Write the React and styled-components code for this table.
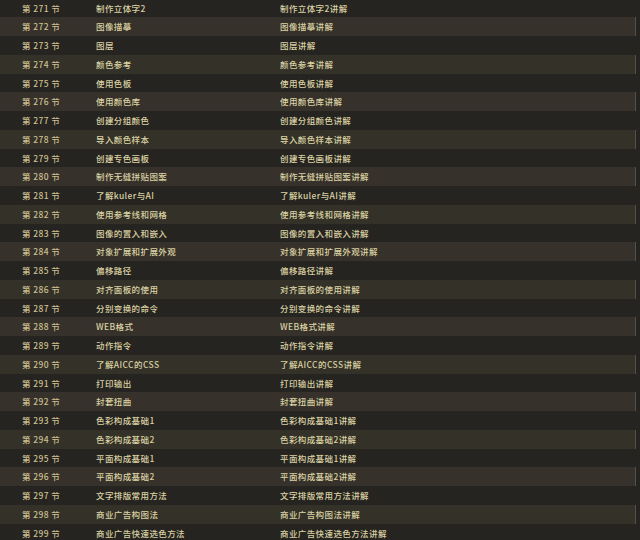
import styled, { createGlobalStyle } from "styled-components";

const GlobalStyle = createGlobalStyle`
  html, body {
    margin: 0;
    padding: 0;
    background: #252420;
  }
`;

const Table = styled.div`
  width: 640px;
  height: 540px;
  overflow: hidden;
  background: #252420;
  font-family: "Noto Sans CJK SC", "Noto Sans", sans-serif;
`;

const Rows = styled.div`
  margin-top: -1.4px;
  display: flex;
  flex-direction: column;
`;

const Row = styled.div`
  display: grid;
  grid-template-columns: 74px 184px 1fr;
  align-items: center;
  height: 18.75px;
  padding-left: 22px;
  margin-right: ${(p) => (p.$alt ? "4px" : "0")};
  background: ${(p) => (p.$alt ? (p.$olive ? "#333128" : "#36312a") : "#252420")};
  border-right: ${(p) => (p.$alt ? "1px solid #55514a" : "none")};
  box-sizing: border-box;
`;

const Cell = styled.span`
  font-size: 8.5px;
  font-weight: 500;
  letter-spacing: 0.4px;
  color: ${(p) => (p.$dim ? "#cdbf8f" : "#dbd1a3")};
  white-space: nowrap;
  line-height: 1;
`;

const items = [
  ["制作立体字2", "制作立体字2讲解"],
  ["图像描摹", "图像描摹讲解"],
  ["图层", "图层讲解"],
  ["颜色参考", "颜色参考讲解"],
  ["使用色板", "使用色板讲解"],
  ["使用颜色库", "使用颜色库讲解"],
  ["创建分组颜色", "创建分组颜色讲解"],
  ["导入颜色样本", "导入颜色样本讲解"],
  ["创建专色画板", "创建专色画板讲解"],
  ["制作无缝拼贴图案", "制作无缝拼贴图案讲解"],
  ["了解kuler与AI", "了解kuler与AI讲解"],
  ["使用参考线和网格", "使用参考线和网格讲解"],
  ["图像的置入和嵌入", "图像的置入和嵌入讲解"],
  ["对象扩展和扩展外观", "对象扩展和扩展外观讲解"],
  ["偏移路径", "偏移路径讲解"],
  ["对齐面板的使用", "对齐面板的使用讲解"],
  ["分别变换的命令", "分别变换的命令讲解"],
  ["WEB格式", "WEB格式讲解"],
  ["动作指令", "动作指令讲解"],
  ["了解AICC的CSS", "了解AICC的CSS讲解"],
  ["打印输出", "打印输出讲解"],
  ["封套扭曲", "封套扭曲讲解"],
  ["色彩构成基础1", "色彩构成基础1讲解"],
  ["色彩构成基础2", "色彩构成基础2讲解"],
  ["平面构成基础1", "平面构成基础1讲解"],
  ["平面构成基础2", "平面构成基础2讲解"],
  ["文字排版常用方法", "文字排版常用方法讲解"],
  ["商业广告构图法", "商业广告构图法讲解"],
  ["商业广告快速选色方法", "商业广告快速选色方法讲解"],
];

export default function App() {
  return (
    <Table>
      <GlobalStyle />
      <Rows>
        {items.map(([name, note], i) => (
          <Row key={i} $alt={i % 2 === 1} $olive={i % 4 === 3}>
            <Cell $dim>第 {271 + i} 节</Cell>
            <Cell>{name}</Cell>
            <Cell>{note}</Cell>
          </Row>
        ))}
      </Rows>
    </Table>
  );
}
